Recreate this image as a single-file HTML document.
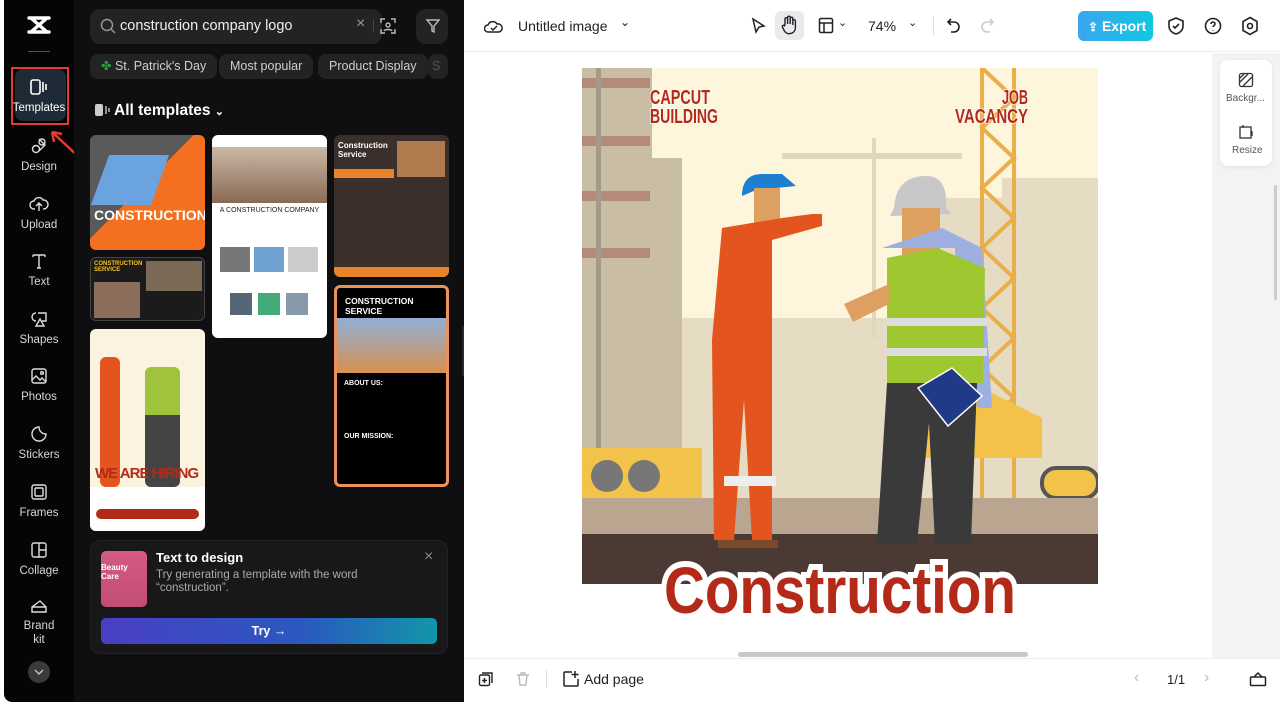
<!DOCTYPE html>
<html><head><meta charset="utf-8"><style>
*{box-sizing:border-box;margin:0;padding:0}
body{width:1280px;height:706px;overflow:hidden;background:#fff;font-family:"Liberation Sans",sans-serif;position:relative}
.abs{position:absolute}
.side{left:4px;top:0;width:70px;height:702px;background:#050505;border-radius:0 0 0 8px}
.panel{left:74px;top:0;width:390px;height:702px;background:#0f0f11}
.nav{position:absolute;left:0;width:70px;text-align:center;color:#d8d8d8;font-size:11.5px}
.nav svg{display:block;margin:0 auto 4px}
.chip{position:absolute;top:54px;height:25px;background:#232326;border-radius:8px;color:#cfcfcf;font-size:12.5px;line-height:25px;padding:0 11px}
.card{position:absolute;border-radius:6px;overflow:hidden}
.top{left:464px;top:0;width:816px;height:52px;background:#fff;border-bottom:1px solid #eceef1}
.ti{position:absolute;color:#222;font-size:14px}
</style></head><body>
<div class="abs side">
 <svg class="abs" style="left:23px;top:14px" width="24" height="22" viewBox="0 0 24 22"><path d="M2 4h20M2 18h20M4 4l16 14M20 4L4 18" stroke="#fff" stroke-width="3.4" fill="none" stroke-linecap="round"/></svg>
 <div class="abs" style="left:24px;top:51px;width:22px;height:1px;background:#555"></div>
 <div class="abs" style="left:7px;top:67px;width:58px;height:58px;border:2px solid #e53935"></div>
 <div class="abs" style="left:11px;top:69px;width:51px;height:52px;background:#1e2a36;border-radius:8px"></div>
 <div class="nav" style="top:79px;color:#fff"><svg width="20" height="16" viewBox="0 0 20 16" style="margin-bottom:7px"><rect x="2" y="1" width="9" height="14" rx="2" stroke="#fff" stroke-width="1.6" fill="none"/><path d="M14 3v10M17 5v6" stroke="#fff" stroke-width="1.6"/></svg>Templates</div>
 <svg class="abs" style="left:40px;top:126px" width="44" height="38"><path d="M38 34L8 6M8 6l2 10M8 6l10 2" stroke="#e53935" stroke-width="2.5" fill="none"/></svg>
 <div class="nav" style="top:137px"><svg width="18" height="18" viewBox="0 0 18 18" fill="none" stroke="#ddd" stroke-width="1.4" style="margin-bottom:6px"><circle cx="6" cy="12" r="3.5"/><path d="M9 2l6 6-6 6"/><circle cx="12" cy="5" r="3"/></svg>Design</div>
 <div class="nav" style="top:195px"><svg width="20" height="18" viewBox="0 0 20 18" fill="none" stroke="#ddd" stroke-width="1.4" style="margin-bottom:6px"><path d="M6 14H5a4 4 0 010-8 5 5 0 019-1 4 4 0 011 9h-1M10 8v8M7 11l3-3 3 3"/></svg>Upload</div>
 <div class="nav" style="top:252px"><svg width="18" height="18" viewBox="0 0 18 18" fill="none" stroke="#ddd" stroke-width="1.4" style="margin-bottom:6px"><path d="M3 3h12M9 3v13M3 3v2M15 3v2M7 16h4"/></svg>Text</div>
 <div class="nav" style="top:310px"><svg width="18" height="18" viewBox="0 0 18 18" fill="none" stroke="#ddd" stroke-width="1.4" style="margin-bottom:6px"><path d="M6 3a4 4 0 100 8M8 3h8v8h-4M10 9l-4 7h8z"/></svg>Shapes</div>
 <div class="nav" style="top:367px"><svg width="18" height="18" viewBox="0 0 18 18" fill="none" stroke="#ddd" stroke-width="1.4" style="margin-bottom:6px"><rect x="2" y="2" width="14" height="14" rx="2"/><path d="M2 13l4-4 4 4 2-2 4 4"/><circle cx="12" cy="6" r="1.3"/></svg>Photos</div>
 <div class="nav" style="top:425px"><svg width="18" height="18" viewBox="0 0 18 18" fill="none" stroke="#ddd" stroke-width="1.4" style="margin-bottom:6px"><path d="M9 2a7 7 0 107 7c-4 0-7-3-7-7z"/></svg>Stickers</div>
 <div class="nav" style="top:483px"><svg width="18" height="18" viewBox="0 0 18 18" fill="none" stroke="#ddd" stroke-width="1.4" style="margin-bottom:6px"><rect x="2" y="2" width="14" height="14" rx="2"/><rect x="5" y="5" width="8" height="8" rx="1"/></svg>Frames</div>
 <div class="nav" style="top:541px"><svg width="18" height="18" viewBox="0 0 18 18" fill="none" stroke="#ddd" stroke-width="1.4" style="margin-bottom:6px"><rect x="2" y="2" width="14" height="14" rx="2"/><path d="M9 2v14M9 9h7"/></svg>Collage</div>
 <div class="nav" style="top:598px;line-height:14px"><svg width="18" height="16" viewBox="0 0 18 16" fill="none" stroke="#ddd" stroke-width="1.4" style="margin-bottom:5px"><path d="M2 14h14V9L10 3 2 9z M2 9h14"/></svg>Brand<br>kit</div>
 <div class="abs" style="left:24px;top:661px;width:22px;height:22px;border-radius:50%;background:#3a3a3d"></div>
 <svg class="abs" style="left:30px;top:668px" width="10" height="8"><path d="M1 2l4 4 4-4" stroke="#ccc" stroke-width="1.3" fill="none"/></svg>
</div>

<div class="abs panel">
 <div class="abs" style="left:16px;top:9px;width:292px;height:35px;background:#232326;border-radius:10px"></div>
 <svg class="abs" style="left:26px;top:18px" width="16" height="16"><circle cx="7" cy="7" r="5.5" stroke="#999" stroke-width="1.4" fill="none"/><path d="M11 11l4 4" stroke="#999" stroke-width="1.4"/></svg>
 <div class="abs" style="left:46px;top:18px;color:#eee;font-size:14.5px">construction company logo</div>
 <div class="abs" style="left:282px;top:15px;color:#999;font-size:16px">×</div>
 <div class="abs" style="left:299px;top:19px;width:1px;height:14px;background:#444"></div>
 <svg class="abs" style="left:306px;top:18px" width="16" height="16" fill="none" stroke="#bbb" stroke-width="1.4"><path d="M1 5V1h4M11 1h4v4M15 11v4h-4M5 15H1v-4"/><circle cx="8" cy="7" r="2"/><path d="M4 13c1-2 7-2 8 0"/></svg>
 <div class="abs" style="left:342px;top:9px;width:32px;height:35px;background:#232326;border-radius:10px"></div>
 <svg class="abs" style="left:350px;top:18px" width="16" height="16" fill="none" stroke="#bbb" stroke-width="1.4"><path d="M3 2h12l-5 6v6l-2-1V8z"/></svg>
 <div class="chip" style="left:16px"><span style="color:#2e9e3c">✤</span> St. Patrick's Day</div>
 <div class="chip" style="left:145px">Most popular</div>
 <div class="chip" style="left:244px">Product Display</div>
 <div class="chip" style="left:354px;width:20px;padding:0 4px;color:#555">S</div>
 <svg class="abs" style="left:20px;top:103px" width="16" height="14"><rect x="1" y="1" width="8" height="12" rx="2" fill="#ccc"/><path d="M12 3v8M15 5v4" stroke="#ccc" stroke-width="1.4"/></svg>
 <div class="abs" style="left:40px;top:102px;color:#fff;font-size:15.5px;font-weight:bold">All templates <span style="font-size:11px">⌄</span></div>

 <div class="card" style="left:16px;top:135px;width:115px;height:115px;background:linear-gradient(135deg,#5a5a5a 0 45%,#f37021 45%)">
  <div class="abs" style="left:10px;top:20px;width:60px;height:50px;background:#6aa3e0;transform:skewX(-20deg)"></div>
  <div class="abs" style="left:4px;top:72px;color:#fff;font-weight:bold;font-size:14px">CONSTRUCTION</div></div>
 <div class="card" style="left:16px;top:257px;width:115px;height:64px;background:#1b1b1b;border:1px solid #444">
  <div class="abs" style="left:3px;top:3px;color:#f7c21d;font-size:6px;font-weight:bold">CONSTRUCTION<br>SERVICE</div>
  <div class="abs" style="left:55px;top:3px;width:56px;height:30px;background:#7a6a55"></div>
  <div class="abs" style="left:3px;top:24px;width:46px;height:36px;background:#8a6d5a"></div></div>
 <div class="card" style="left:16px;top:329px;width:115px;height:202px;background:#fbf3e0">
  <div class="abs" style="left:10px;top:28px;width:20px;height:130px;background:#e4541e;border-radius:6px"></div>
  <div class="abs" style="left:55px;top:38px;width:35px;height:120px;background:linear-gradient(#9fc33c 0 40%,#444 40%);border-radius:6px"></div>
  <div class="abs" style="left:0;top:158px;width:115px;height:44px;background:#fff"></div>
  <div class="abs" style="left:5px;top:136px;color:#b42a18;font-weight:bold;font-size:15px;letter-spacing:-1px">WE ARE HIRING</div>
  <div class="abs" style="left:6px;top:180px;width:103px;height:10px;background:#b42a18;border-radius:5px"></div></div>
 <div class="card" style="left:138px;top:135px;width:115px;height:203px;background:#fff">
  <div class="abs" style="left:0;top:12px;width:115px;height:56px;background:linear-gradient(#cbb8a5,#8a6a55)"></div>
  <div class="abs" style="left:0;top:72px;width:115px;text-align:center;font-size:7px;color:#222">A CONSTRUCTION COMPANY</div>
  <div class="abs" style="left:8px;top:112px;width:30px;height:25px;background:#777"></div><div class="abs" style="left:42px;top:112px;width:30px;height:25px;background:#6ea0d0"></div><div class="abs" style="left:76px;top:112px;width:30px;height:25px;background:#ccc"></div>
  <div class="abs" style="left:18px;top:158px;width:22px;height:22px;background:#567"></div><div class="abs" style="left:46px;top:158px;width:22px;height:22px;background:#4a7"></div><div class="abs" style="left:74px;top:158px;width:22px;height:22px;background:#89a"></div></div>
 <div class="card" style="left:260px;top:135px;width:115px;height:142px;background:#3b2f2b">
  <div class="abs" style="left:4px;top:6px;color:#fff;font-size:8px;font-weight:bold">Construction<br>Service</div>
  <div class="abs" style="left:63px;top:6px;width:48px;height:36px;background:#b07a4f"></div>
  <div class="abs" style="left:0;top:34px;width:60px;height:9px;background:#e8832a"></div>
  <div class="abs" style="left:0;top:132px;width:115px;height:10px;background:#e8832a"></div></div>
 <div class="card" style="left:260px;top:285px;width:115px;height:202px;background:#000;border:3px solid #e8935a">
  <div class="abs" style="left:8px;top:8px;color:#fff;font-size:8.5px;font-weight:bold">CONSTRUCTION SERVICE</div>
  <div class="abs" style="left:0;top:30px;width:109px;height:55px;background:linear-gradient(#8fb0d8,#d89050)"></div>
  <div class="abs" style="left:7px;top:92px;color:#fff;font-size:7px;font-weight:bold">ABOUT US:</div>
  <div class="abs" style="left:7px;top:145px;color:#fff;font-size:7px;font-weight:bold">OUR MISSION:</div></div>
 <div class="abs" style="left:388px;top:326px;width:8px;height:50px;background:#2a2a2d;border-radius:0 4px 4px 0"></div>

 <div class="abs" style="left:16px;top:540px;width:358px;height:114px;background:#18181b;border-radius:10px;border:1px solid #222"></div>
 <div class="abs" style="left:27px;top:551px;width:46px;height:56px;background:linear-gradient(#d65a82,#c24d74);border-radius:5px"><div style="color:#fff;font-size:8px;font-weight:bold;margin-top:12px">Beauty Care</div></div>
 <div class="abs" style="left:82px;top:550px;color:#fff;font-size:13px;font-weight:bold">Text to design</div>
 <div class="abs" style="left:82px;top:569px;color:#aaa;font-size:11.5px;line-height:13px">Try generating a template with the word<br>“construction”.</div>
 <div class="abs" style="left:350px;top:548px;color:#888;font-size:16px">×</div>
 <div class="abs" style="left:27px;top:618px;width:336px;height:26px;border-radius:5px;background:linear-gradient(90deg,#4a3fc4,#2a58c0 60%,#1296a8);color:#fff;text-align:center;font-size:12.5px;line-height:26px;font-weight:bold">Try →</div>
</div>

<div class="abs top">
 <svg class="ti" style="left:20px;top:17px" width="20" height="18" fill="none" stroke="#222" stroke-width="1.5"><path d="M5 15H4a3.5 3.5 0 010-7 5 5 0 019-1 4 4 0 012 8H5zM7 11l2 2 4-4"/></svg>
 <div class="ti" style="left:54px;top:18px">Untitled image</div>
 <div class="ti" style="left:156px;top:15px;font-size:12px">⌄</div>
 <svg class="ti" style="left:286px;top:17px" width="16" height="18" fill="none" stroke="#222" stroke-width="1.5"><path d="M3 2l11 7-5 1-3 5z"/></svg>
 <div class="abs" style="left:311px;top:11px;width:29px;height:29px;background:#e8eaed;border-radius:6px"></div>
 <svg class="ti" style="left:316px;top:15px" width="18" height="20" fill="none" stroke="#222" stroke-width="1.4"><path d="M5 10V4a1.3 1.3 0 012.6 0v5V2.5a1.3 1.3 0 012.6 0V9V3.5a1.3 1.3 0 012.6 0V10V6a1.3 1.3 0 012.6 0v7a6 6 0 01-11 3l-2-4a1.3 1.3 0 012.2-1.3z"/></svg>
 <svg class="ti" style="left:354px;top:17px" width="16" height="17" fill="none" stroke="#222" stroke-width="1.5"><rect x="1.5" y="1.5" width="13" height="14" rx="1.5"/><path d="M1.5 6h13M6 6v9.5"/></svg>
 <div class="ti" style="left:374px;top:16px;font-size:11px">⌄</div>
 <div class="ti" style="left:404px;top:18px">74%</div>
 <div class="ti" style="left:444px;top:16px;font-size:11px">⌄</div>
 <div class="abs" style="left:469px;top:17px;width:1px;height:18px;background:#ddd"></div>
 <svg class="ti" style="left:482px;top:17px" width="16" height="18" fill="none" stroke="#222" stroke-width="1.6"><path d="M5 2L2 5l3 3M2 5h6a5 5 0 010 10H5"/></svg>
 <svg class="ti" style="left:515px;top:17px" width="16" height="18" fill="none" stroke="#ccc" stroke-width="1.6"><path d="M11 2l3 3-3 3M14 5H8a5 5 0 000 10h3"/></svg>
 <div class="abs" style="left:614px;top:11px;width:75px;height:30px;border-radius:6px;background:linear-gradient(90deg,#3aa6f0,#11c7e0);color:#fff;font-size:14px;line-height:30px;padding-left:10px;font-weight:bold"><span style="font-size:12px">⇪</span> Export</div>
 <svg class="ti" style="left:703px;top:16px" width="18" height="20" fill="none" stroke="#222" stroke-width="1.6"><path d="M9 2l7 3v5c0 4-3 7-7 8-4-1-7-4-7-8V5zM6 10l2 2 4-4"/></svg>
 <svg class="ti" style="left:740px;top:17px" width="18" height="18" fill="none" stroke="#222" stroke-width="1.6"><circle cx="9" cy="9" r="7.5"/><path d="M7 7a2 2 0 114 0c0 1.5-2 1.5-2 3M9 13v.5"/></svg>
 <svg class="ti" style="left:777px;top:16px" width="18" height="20" fill="none" stroke="#222" stroke-width="1.6"><path d="M9 1.5l7 4v9l-7 4-7-4v-9z"/><circle cx="9" cy="10" r="2.5"/></svg>
</div>

<div class="abs" style="left:464px;top:53px;width:748px;height:605px;background:#fff"></div>
<div class="abs" style="left:1212px;top:53px;width:68px;height:605px;background:#f1f3f5"></div>
<div class="abs" style="left:1220px;top:60px;width:52px;height:106px;background:#fff;border-radius:8px;box-shadow:0 1px 4px rgba(0,0,0,.08)"></div>
<svg class="abs" style="left:1238px;top:72px" width="16" height="16" fill="none" stroke="#333" stroke-width="1.3"><rect x="1.5" y="1.5" width="13" height="13" rx="2"/><path d="M2 10l8-8M5 14l9-9M2 6l4-4"/></svg>
<div class="abs" style="left:1226px;top:93px;font-size:10px;color:#555">Backgr...</div>
<svg class="abs" style="left:1238px;top:124px" width="16" height="16" fill="none" stroke="#333" stroke-width="1.3"><rect x="2" y="3" width="11" height="11"/><path d="M5 1v3M14 7v5"/></svg>
<div class="abs" style="left:1232px;top:145px;font-size:10px;color:#555">Resize</div>
<div class="abs" style="left:1274px;top:185px;width:3px;height:115px;background:#ccc;border-radius:2px"></div>

<svg class="abs" style="left:582px;top:68px" width="516" height="560" viewBox="0 0 516 560">
 <rect width="516" height="516" fill="#fdf5dc"/>
 <g fill="#e6dcc4"><rect x="340" y="130" width="80" height="300"/><rect x="420" y="110" width="96" height="320"/><rect x="80" y="250" width="240" height="180"/></g>
 <g fill="#c9bda5"><rect x="0" y="0" width="70" height="430"/><rect x="10" y="90" width="90" height="320"/></g>
 <g fill="#b48a78"><rect x="0" y="10" width="68" height="10"/><rect x="0" y="68" width="68" height="10"/><rect x="0" y="123" width="68" height="10"/><rect x="0" y="180" width="68" height="10"/></g>
 <rect x="14" y="0" width="5" height="430" fill="#a39a88"/>
 <path d="M200 85h180v6H200z M290 70h4v200h-4z" fill="#e2d7bd"/>
 <g stroke="#eaae4a" stroke-width="4" fill="none"><path d="M400 0v440M432 0v440"/><path d="M400 0l32 30-32 30 32 30-32 30 32 30-32 30 32 30-32 30 32 30-32 30 32 30-32 30 32 30 "/></g>
 <path d="M0 380h120v50H0z" fill="#f2c24a"/><circle cx="25" cy="408" r="16" fill="#777"/><circle cx="62" cy="408" r="16" fill="#777"/>
 <path d="M320 380l80-60 60 30v40H320z" fill="#f2c24a"/><rect x="460" y="400" width="56" height="30" rx="14" fill="#f2c24a" stroke="#555" stroke-width="4"/>
 <rect x="0" y="430" width="516" height="36" fill="#b9a590"/>
 <rect x="0" y="466" width="516" height="50" fill="#4a3a33"/>
 <path d="M160 128q0-22 20-22h20l14 12-40 4z" fill="#1d7fd0"/>
 <rect x="172" y="120" width="26" height="42" fill="#dda060"/>
 <path d="M140 160l60-10 30-4h10v12l-50 14 0 300-20 0-8-140-10 140h-20l-2-200z" fill="#e4541e"/>
 <rect x="142" y="408" width="52" height="10" fill="#eee"/>
 <path d="M136 472h60v8h-60z" fill="#7b4a2a"/>
 <path d="M312 140q2-32 32-32 22 0 20 32l6 6-62 2z" fill="#c8c8c8"/>
 <rect x="320" y="140" width="38" height="50" fill="#dda060"/>
 <path d="M300 180l60-20 40 20 10 160h-14l-10-60-10 0-3-100z" fill="#9db0e0"/>
 <path d="M305 190l50-10 48 20 -2 115H305z" fill="#9fc830"/>
 <path d="M305 250h100v8H305z M305 280h100v8H305z" fill="#ddd"/>
 <path d="M305 315h90l-6 160h-36l-6-120-12 120h-40z" fill="#3a3a3a"/>
 <path d="M262 236l45-20v20l-36 18z" fill="#dda060"/>
 <path d="M336 320l34-20 30 28-34 30z" fill="#1f3a86" stroke="#fff" stroke-width="1.5"/>
 <g font-family="Liberation Sans" font-weight="bold" font-size="20" fill="#b42a18" stroke="#fff" stroke-width="1.5" paint-order="stroke" lengthAdjust="spacingAndGlyphs">
 <text x="68" y="36" textLength="60" lengthAdjust="spacingAndGlyphs">CAPCUT</text>
 <text x="68" y="55" textLength="68" lengthAdjust="spacingAndGlyphs">BUILDING</text>
 <text x="420" y="36" textLength="26" lengthAdjust="spacingAndGlyphs">JOB</text>
 <text x="373" y="55" textLength="73" lengthAdjust="spacingAndGlyphs">VACANCY</text>
 </g>
 <text x="82" y="545" font-family="Liberation Sans" font-weight="bold" font-size="66" fill="#b42a18" stroke="#fff" stroke-width="12" paint-order="stroke" textLength="352" lengthAdjust="spacingAndGlyphs">Construction</text>
</svg>
<div class="abs" style="left:738px;top:652px;width:290px;height:5px;background:#c8c8c8;border-radius:3px"></div>

<div class="abs" style="left:464px;top:658px;width:816px;height:44px;background:#fff;border-top:1px solid #eceef1"></div>
<svg class="abs" style="left:478px;top:671px" width="16" height="16" fill="none" stroke="#222" stroke-width="1.4"><rect x="1.5" y="4" width="10" height="10.5" rx="1.5"/><path d="M4 2h10v10M6.5 7v5M4 9.5h5"/></svg>
<svg class="abs" style="left:515px;top:671px" width="16" height="16" fill="none" stroke="#bbb" stroke-width="1.4"><path d="M2 4h12M6 4V2h4v2M4 4l1 10h6l1-10"/></svg>
<div class="abs" style="left:546px;top:670px;width:1px;height:18px;background:#ddd"></div>
<svg class="abs" style="left:562px;top:670px" width="18" height="18" fill="none" stroke="#222" stroke-width="1.5"><path d="M10 2H3a1 1 0 00-1 1v12a1 1 0 001 1h12a1 1 0 001-1V9M13 1v7M9.5 4.5h7"/></svg>
<div class="abs" style="left:584px;top:671px;font-size:14px;color:#222">Add page</div>
<div class="abs" style="left:1134px;top:669px;font-size:16px;color:#bbb">‹</div>
<div class="abs" style="left:1167px;top:672px;font-size:13px;color:#222">1/1</div>
<div class="abs" style="left:1204px;top:669px;font-size:16px;color:#bbb">›</div>
<svg class="abs" style="left:1249px;top:671px" width="18" height="16" fill="none" stroke="#222" stroke-width="1.5"><rect x="1.5" y="6" width="15" height="8.5" rx="1"/><path d="M5 6l4-4 4 4"/></svg>
</body></html>
